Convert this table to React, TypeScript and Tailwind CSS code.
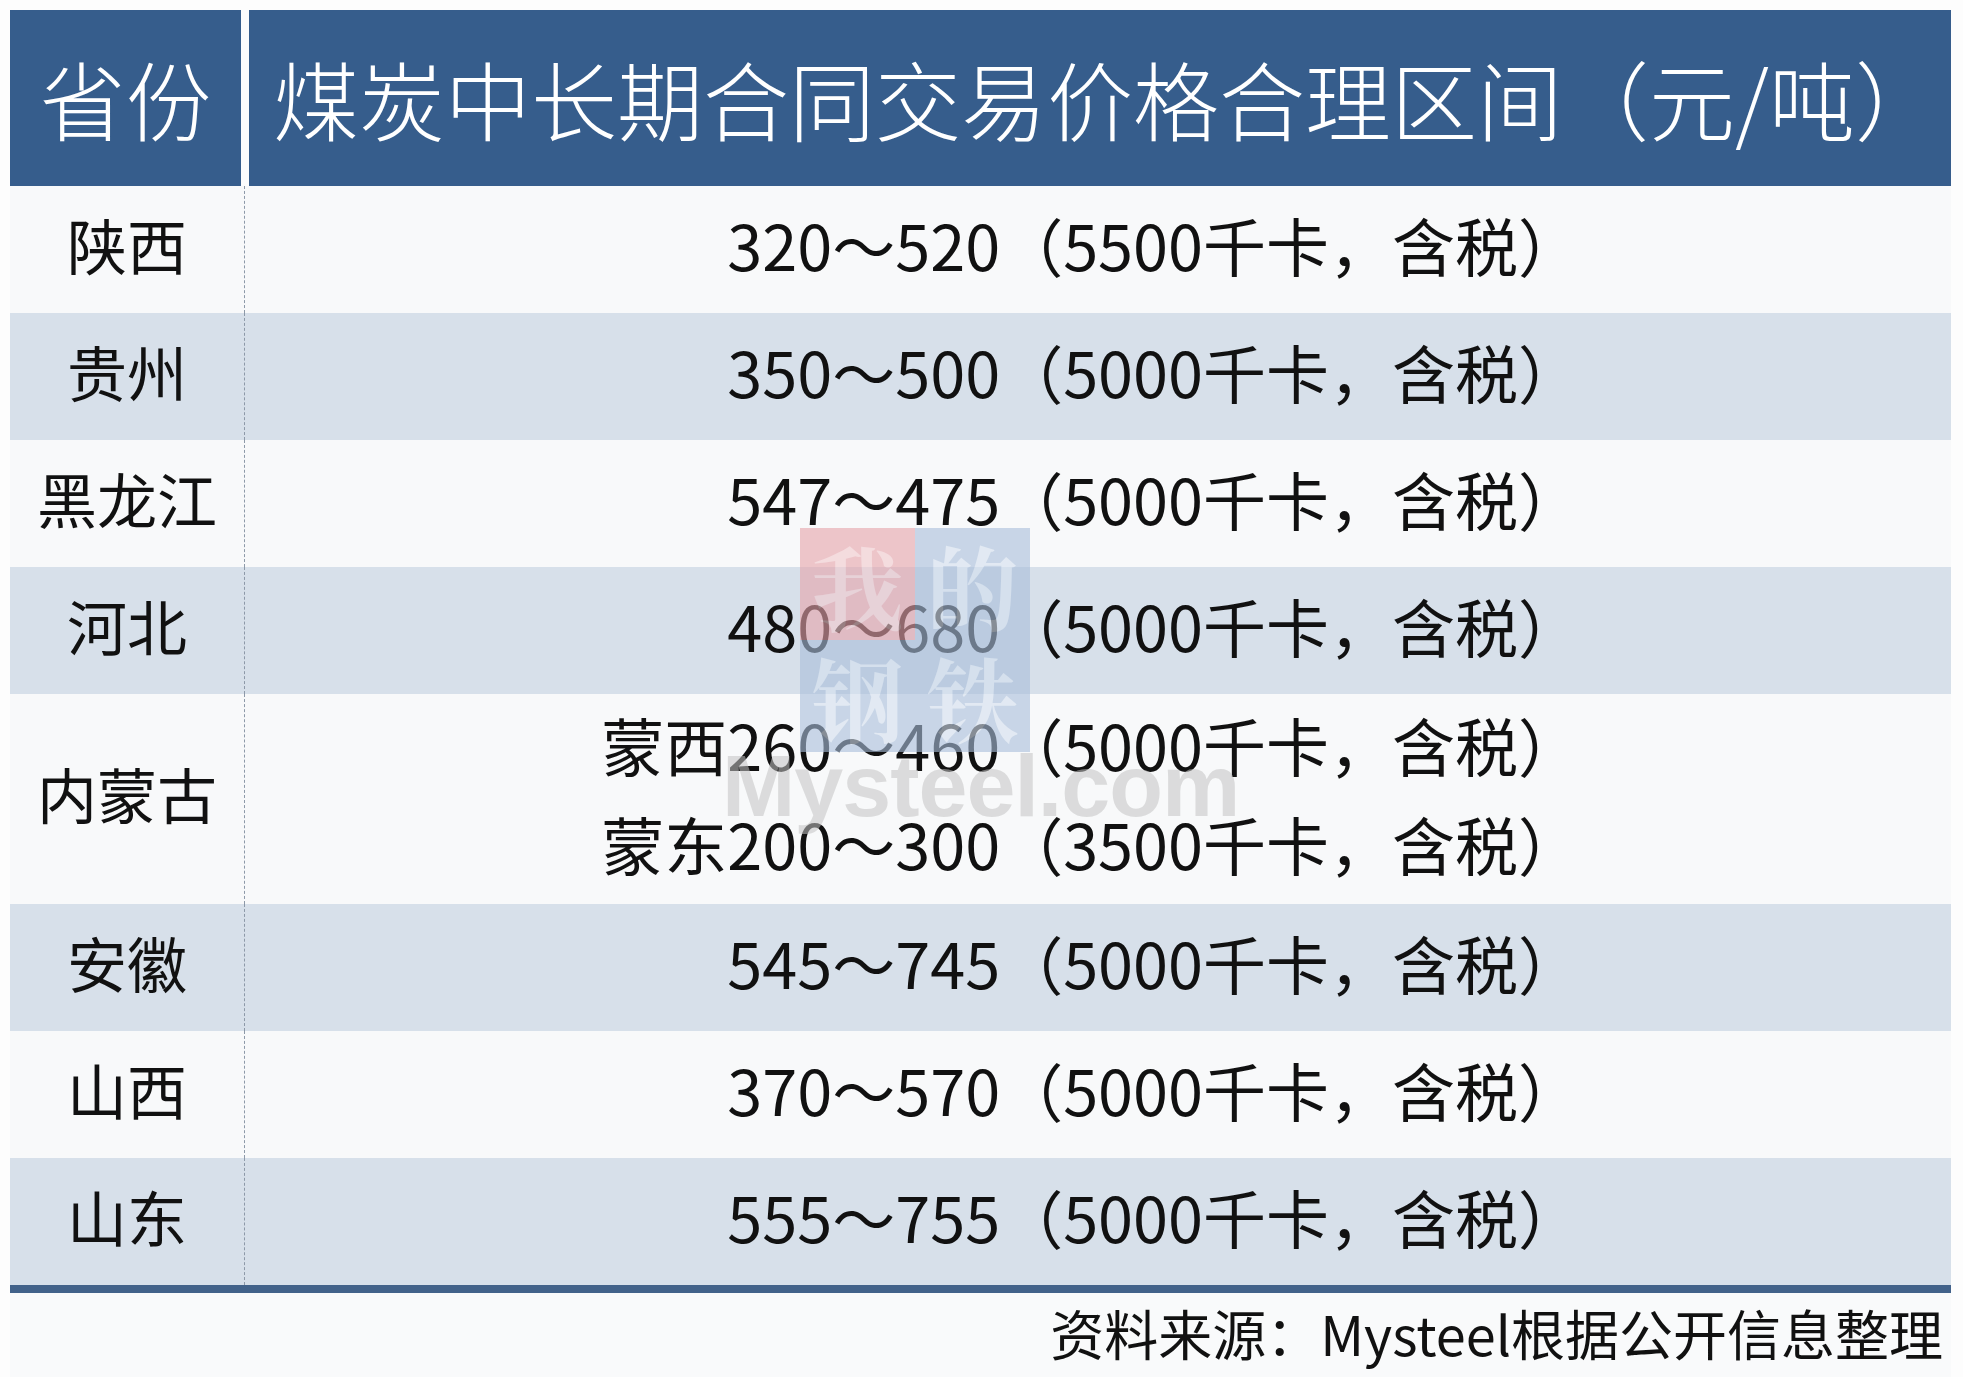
import React from 'react'

type Row = {
  prov: string
  lines: string[]
}

const rows: Row[] = [
  { prov: '陕西', lines: ['320～520（5500千卡，含税）'] },
  { prov: '贵州', lines: ['350～500（5000千卡，含税）'] },
  { prov: '黑龙江', lines: ['547～475（5000千卡，含税）'] },
  { prov: '河北', lines: ['480～680（5000千卡，含税）'] },
  { prov: '内蒙古', lines: ['蒙西260～460（5000千卡，含税）', '蒙东200～300（3500千卡，含税）'] },
  { prov: '安徽', lines: ['545～745（5000千卡，含税）'] },
  { prov: '山西', lines: ['370～570（5000千卡，含税）'] },
  { prov: '山东', lines: ['555～755（5000千卡，含税）'] },
]

const cjk = "font-['Noto_Sans_CJK_SC','Noto_Sans',sans-serif]"

function Watermark() {
  return (
    <div className="absolute left-[722px] top-[528px] w-[540px] pointer-events-none">
      <div className="ml-[78px] grid grid-cols-[115px_115px] grid-rows-[112px_112px] opacity-60">
        <div className="bg-[#e7a3aa] flex items-center justify-center text-[92px] leading-none text-[#f3c9cd] font-['Noto_Serif_CJK_SC','Noto_Sans_CJK_SC',serif] font-bold">我</div>
        <div className="bg-[#a9bedb] flex items-center justify-center text-[92px] leading-none text-[#d4e0ef] font-['Noto_Serif_CJK_SC','Noto_Sans_CJK_SC',serif] font-bold">的</div>
        <div className="bg-[#a9bedb] flex items-center justify-center text-[92px] leading-none text-[#d4e0ef] font-['Noto_Serif_CJK_SC','Noto_Sans_CJK_SC',serif] font-bold">钢</div>
        <div className="bg-[#a9bedb] flex items-center justify-center text-[92px] leading-none text-[#d4e0ef] font-['Noto_Serif_CJK_SC','Noto_Sans_CJK_SC',serif] font-bold">铁</div>
      </div>
      <div className="-mt-[10px] text-[88px] leading-none font-bold text-[#c4c4c4] opacity-55 font-['Liberation_Sans',Arial,sans-serif] tracking-[-1px]">
        Mysteel.com
      </div>
    </div>
  )
}

export default function App() {
  return (
    <div className={`relative w-[1963px] h-[1377px] bg-[#fdfdfd] overflow-hidden ${cjk}`}>
      <div className="ml-[10px] pt-[10px] w-[1941px]">
        {/* 表头 */}
        <div className="grid grid-cols-[231px_1fr] gap-x-[8px] h-[176px]">
          <div className="bg-[#365d8c] flex items-center justify-center text-white text-[86px] font-light leading-none">
            省份
          </div>
          <div className="bg-[#365d8c] flex items-center pl-[24px] text-white text-[86px] font-light leading-none">
            煤炭中长期合同交易价格合理区间（元/吨）
          </div>
        </div>

        {/* 数据行 */}
        {rows.map((r, i) => (
          <div
            key={r.prov}
            className={`grid grid-cols-[235px_1fr] ${r.lines.length > 1 ? 'h-[210px]' : 'h-[127px]'} ${i % 2 === 0 ? 'bg-[#f8f9fa]' : 'bg-[#d7e0ea]'}`}
          >
            <div className="flex items-center justify-center pb-[12px] border-r border-dashed border-[#8d99a8] text-[60px] leading-none text-[#111]">
              {r.prov}
            </div>
            <div className="flex flex-col items-end justify-center gap-[36px] pb-[12px] pr-[370px] text-[63px] leading-none text-[#111]">
              {r.lines.map((l) => (
                <div key={l}>{l}</div>
              ))}
            </div>
          </div>
        ))}

        <div className="h-[8px] bg-[#42628a]" />

        {/* 来源 */}
        <div className="h-[84px] flex items-center justify-end pb-[4px] pr-[8px] bg-[#f9fafb] text-[54px] leading-none text-[#111]">
          资料来源：Mysteel根据公开信息整理
        </div>
      </div>

      <Watermark />
    </div>
  )
}
